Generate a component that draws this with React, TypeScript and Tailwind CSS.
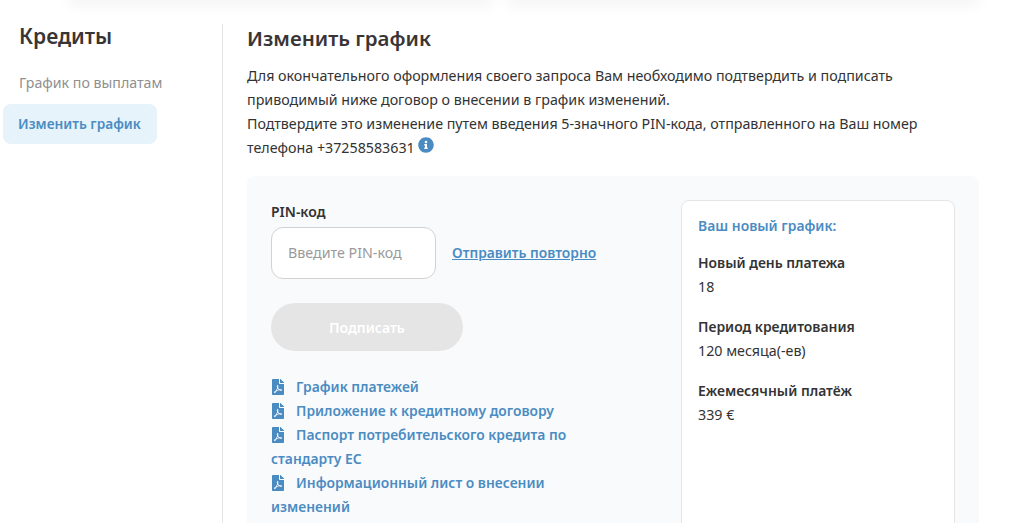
import { FaFilePdf, FaInfoCircle } from "react-icons/fa";

const links = [
  "График платежей",
  "Приложение к кредитному договору",
  "Паспорт потребительского кредита по стандарту ЕС",
  "Информационный лист о внесении изменений",
];

const schedule = [
  { label: "Новый день платежа", value: "18" },
  { label: "Период кредитования", value: "120 месяца(-ев)" },
  { label: "Ежемесячный платёж", value: "339 €" },
];

const App = () => {
  return (
    <div className="h-[523px] w-[1013px] overflow-hidden bg-white font-['Noto_Sans','Open_Sans',sans-serif] text-[14.25px] text-[#333333]">
      <div className="flex h-0 gap-5 pl-[72px]">
        <div className="h-0 w-[418px] shadow-[0_0_14px_4px_rgba(0,0,0,0.07)]" />
        <div className="h-0 w-[465px] shadow-[0_0_14px_4px_rgba(0,0,0,0.07)]" />
      </div>
      <div className="flex pt-6">
        <aside className="h-[499px] w-[223px] shrink-0 border-r border-[#e5e5e5] pl-[3px]">
          <h2 className="pl-4 text-[21px] leading-6 font-semibold text-[#3a3535]">Кредиты</h2>
          <p className="mt-[25px] pl-4 text-[14.2px] leading-5 text-[#8f8f8f]">График по выплатам</p>
          <div className="mt-[11px] flex h-10 w-[154px] items-center rounded-lg bg-[#e6f3fb] pl-[15px] text-[13.7px] font-semibold text-[#4a8cc2]">
            Изменить график
          </div>
        </aside>
        <main className="w-[756px] pl-6">
          <h1 className="text-[20.5px] leading-7 font-semibold text-[#3a3535]">Изменить график</h1>
          <p className="mt-3 w-[700px] leading-6">
            Для окончательного оформления своего запроса Вам необходимо подтвердить и подписать
            <br />
            приводимый ниже договор о внесении в график изменений.
            <br />
            Подтвердите это изменение путем введения 5-значного PIN-кода, отправленного на Ваш номер телефона +37258583631{" "}
            <FaInfoCircle className="inline-block align-baseline text-[16px] text-[#4a8cc2]" />
          </p>
          <section className="mt-[16px] flex h-[400px] w-[732px] rounded-lg bg-[#f9fafc] pt-6 pl-6">
            <div className="w-[410px]">
              <label className="block text-[14px] leading-6 font-semibold">PIN-код</label>
              <div className="mt-[3px] flex items-center gap-4">
                <div className="flex h-[52px] w-[165px] items-center rounded-xl border border-[#d2d2d2] bg-white pl-4 text-[#9a9a9a]">
                  Введите PIN-код
                </div>
                <a className="text-[13.8px] font-semibold text-[#4a8cc2] underline">Отправить повторно</a>
              </div>
              <button className="mt-6 h-12 w-[192px] rounded-3xl bg-[#e5e5e5] text-[14px] font-semibold text-white">
                Подписать
              </button>
              <ul className="mt-6 w-[310px]">
                {links.map((link) => (
                  <li key={link} className="text-[13.85px] leading-6 font-semibold text-[#4a8cc2]">
                    <FaFilePdf className="mr-[10px] -ml-px inline-block align-[-3px] text-[16px] text-[#4a8cc2]" />
                    {link}
                  </li>
                ))}
              </ul>
            </div>
            <div className="h-[400px] w-[274px] rounded-lg border border-[#e5e5e5] bg-white px-4 pt-[15px]">
              <h3 className="text-[13.9px] leading-5 font-semibold text-[#4a8cc2]">Ваш новый график:</h3>
              {schedule.map((row) => (
                <div key={row.label} className="mt-[16px] leading-6 first-of-type:mt-[15px]">
                  <div className="text-[13.9px] font-semibold">{row.label}</div>
                  <div>{row.value}</div>
                </div>
              ))}
            </div>
          </section>
        </main>
      </div>
    </div>
  );
};

export default App;
